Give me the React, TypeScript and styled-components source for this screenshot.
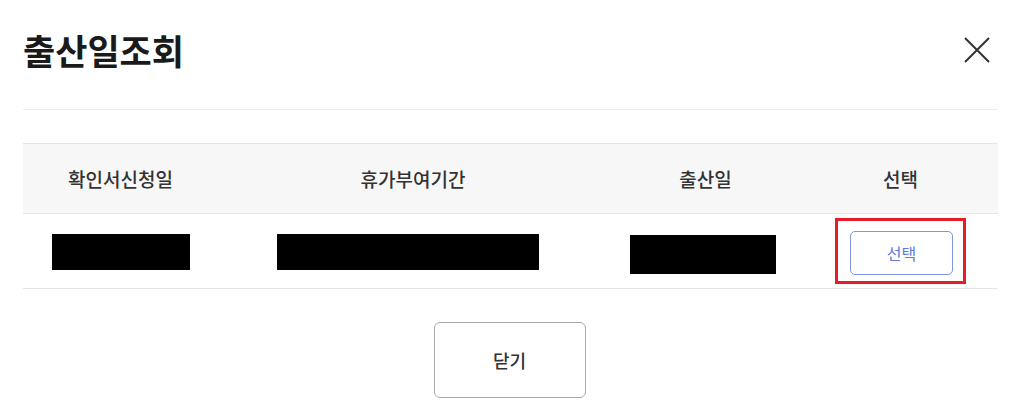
import styled, { createGlobalStyle } from "styled-components";

const GlobalStyle = createGlobalStyle`
  body {
    margin: 0;
    background: #fff;
    font-family: "Noto Sans CJK KR", "Noto Sans", sans-serif;
    color: #222;
  }
`;

const rows = [{ applied: 138, period: 262, birth: 146 }];

export default function App() {
  return (
    <>
      <GlobalStyle />
      <Modal>
        <Header>
          <Title>출산일조회</Title>
          <CloseIcon aria-label="닫기">
            <svg width="26" height="26" viewBox="0 0 26 26">
              <path d="M1 1 L25 25 M25 1 L1 25" stroke="#333" strokeWidth="2" />
            </svg>
          </CloseIcon>
        </Header>

        <Table>
          <thead>
            <tr>
              <Th width="20%">확인서신청일</Th>
              <Th width="40%">휴가부여기간</Th>
              <Th width="20%">출산일</Th>
              <Th width="20%">선택</Th>
            </tr>
          </thead>
          <tbody>
            {rows.map((r, i) => (
              <tr key={i}>
                <Td>
                  <Redacted style={{ width: r.applied }} />
                </Td>
                <Td>
                  <Redacted style={{ width: r.period }} shift={10} />
                </Td>
                <Td>
                  <Redacted style={{ width: r.birth }} shift={6} tall />
                </Td>
                <Td>
                  <Highlight>
                    <SelectButton>선택</SelectButton>
                  </Highlight>
                </Td>
              </tr>
            ))}
          </tbody>
        </Table>

        <Footer>
          <CloseButton>닫기</CloseButton>
        </Footer>
      </Modal>
    </>
  );
}

const Modal = styled.div`
  padding: 0 26px 0 23px;
`;

const Header = styled.div`
  height: 110px;
  box-sizing: border-box;
  padding-bottom: 10px;
  display: flex;
  align-items: center;
  justify-content: space-between;
  border-bottom: 1px solid #eeeeee;
`;

const Title = styled.h1`
  margin: 0;
  font-size: 35px;
  font-weight: 700;
  color: #1a1a1a;
`;

const CloseIcon = styled.button`
  border: 0;
  background: none;
  padding: 0;
  margin-right: 8px;
  display: flex;
  cursor: pointer;
`;

const Table = styled.table`
  width: 100%;
  margin-top: 33px;
  border-collapse: collapse;
  table-layout: fixed;
  border-top: 1px solid #e6e6e6;
`;

const Th = styled.th<{ width: string }>`
  width: ${(p) => p.width};
  height: 69px;
  background: #f7f7f7;
  font-size: 19px;
  font-weight: 500;
  color: #333;
  text-align: center;
  border-bottom: 1px solid #e6e6e6;
  padding: 0;
`;

const Td = styled.td`
  height: 74px;
  text-align: center;
  border-bottom: 1px solid #e6e6e6;
  padding: 0;
`;

const Redacted = styled.div<{ tall?: boolean; shift?: number }>`
  display: inline-block;
  vertical-align: middle;
  height: ${(p) => (p.tall ? 39 : 36)}px;
  margin-top: ${(p) => (p.tall ? 6 : 2)}px;
  margin-right: ${(p) => p.shift ?? 0}px;
  background: #000;
`;

const Highlight = styled.div`
  display: inline-flex;
  vertical-align: middle;
  margin-top: 0;
  padding: 10px 10px 6px 12px;
  border: 3px solid #e41e26;
`;

const SelectButton = styled.button`
  width: 103px;
  height: 44px;
  border: 1px solid #7e96e2;
  border-radius: 5px;
  background: #fff;
  color: #5b7be0;
  font-family: inherit;
  font-size: 16px;
  cursor: pointer;
`;

const Footer = styled.div`
  display: flex;
  justify-content: center;
  padding-top: 33px;
`;

const CloseButton = styled.button`
  width: 152px;
  height: 76px;
  margin-left: -2px;
  border: 1px solid #aaaaaa;
  border-radius: 6px;
  background: #fff;
  font-family: inherit;
  font-size: 18px;
  font-weight: 500;
  color: #333;
  cursor: pointer;
`;
